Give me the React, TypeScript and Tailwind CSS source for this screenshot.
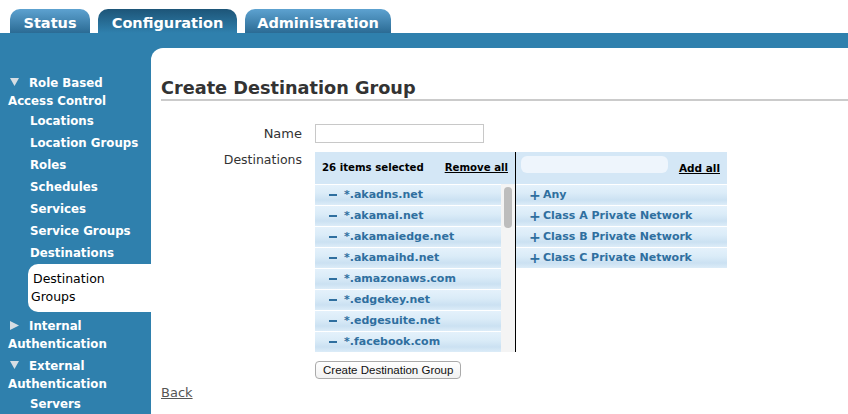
import React from "react";

const tabs = [
  { label: "Status", width: "w-[80px]", active: false },
  { label: "Configuration", width: "w-[139px]", active: true },
  { label: "Administration", width: "w-[146px]", active: false },
];

const roleItems = [
  "Locations",
  "Location Groups",
  "Roles",
  "Schedules",
  "Services",
  "Service Groups",
  "Destinations",
];

const selected = [
  "*.akadns.net",
  "*.akamai.net",
  "*.akamaiedge.net",
  "*.akamaihd.net",
  "*.amazonaws.com",
  "*.edgekey.net",
  "*.edgesuite.net",
  "*.facebook.com",
  "*.fbcdn.net",
  "*.google.com",
  "*.googleapis.com",
  "*.gstatic.com",
];

const available = [
  "Any",
  "Class A Private Network",
  "Class B Private Network",
  "Class C Private Network",
];

const rowBg =
  "bg-[linear-gradient(to_bottom,#e4f1fb_0%,#dbecf8_40%,#cbe1f2_75%,#dcecf8_100%)]";

function Down() {
  return (
    <svg width="9" height="8" viewBox="0 0 9 8" className="inline-block mr-[10px] ml-[2px] align-[1px]">
      <polygon points="0,0 9,0 4.5,8" fill="#d6dde3" />
    </svg>
  );
}

function Right() {
  return (
    <svg width="9" height="9" viewBox="0 0 9 9" className="inline-block mr-[10px] ml-[2px] align-[0px]">
      <polygon points="0,0 9,4.5 0,9" fill="#d6dde3" />
    </svg>
  );
}

export default function App() {
  return (
    <div className="w-[848px] h-[414px] overflow-hidden bg-white font-['DejaVu_Sans',sans-serif]">
      {/* Tabs */}
      <div className="flex items-end h-[33px] pl-[10px] gap-[8px]">
        {tabs.map((t) => (
          <div
            key={t.label}
            className={
              t.active
                ? `${t.width} h-[24px] rounded-t-[10px] text-center text-white font-bold text-[14.5px] leading-[28px] bg-[linear-gradient(to_bottom,#1d5578,#2f80ad)]`
                : `${t.width} h-[24px] rounded-t-[10px] text-center text-white font-bold text-[14.5px] leading-[28px] bg-[linear-gradient(to_bottom,#5da2d0,#2b6b94)]`
            }
          >
            {t.label}
          </div>
        ))}
      </div>

      <div className="flex bg-[#2f80ad] pt-[15px] h-[381px]">
        {/* Sidebar */}
        <div className="w-[151px] shrink-0 pt-[26px] pl-[8px] text-white font-bold text-[11.8px]">
          <div className="leading-[18px] pr-[8px]">
            <Down />
            Role Based Access Control
          </div>
          {roleItems.map((i) => (
            <div key={i} className="h-[22px] leading-[22px] pl-[22px]">
              {i}
            </div>
          ))}
          <div className="ml-[20px] bg-white rounded-l-[10px] py-[6px] pl-[3px] indent-[2px] text-black font-normal text-[12.5px] leading-[18px]">
            Destination
            <br />
            Groups
          </div>
          <div className="mt-[5px] leading-[18px] pr-[8px]">
            <Right />
            Internal Authentication
          </div>
          <div className="mt-[4px] leading-[18px] pr-[8px]">
            <Down />
            External Authentication
          </div>
          <div className="h-[22px] leading-[22px] pl-[22px]">Servers</div>
        </div>

        {/* Content */}
        <div className="flex-1 bg-white rounded-tl-[12px] pl-[10px]">
          <h1 className="mt-[29px] text-[17.7px] leading-[22px] font-bold text-[#333] border-b-2 border-[#cbcbcb]">
            Create Destination Group
          </h1>

          <div className="grid grid-cols-[141px_1fr] gap-x-[13px] mt-[23px]">
            <div className="text-right text-[13px] leading-[19px] text-[#333]">Name</div>
            <input className="w-[169px] h-[19px] border border-[#c8c8c8] bg-white outline-none" />

            <div className="mt-[9px] text-right text-[12.5px] leading-[16px] text-[#333]">
              Destinations
            </div>
            <div className="mt-[9px] flex h-[200px]">
              {/* Selected */}
              <div className="w-[200px] flex flex-col">
                <div className="h-[32px] shrink-0 bg-[#d4e7f6] flex items-center justify-between px-[7px] text-[10.2px] font-bold text-black">
                  <span>26 items selected</span>
                  <span className="underline">Remove all</span>
                </div>
                <div className="flex h-[168px]">
                  <div className="w-[186px] overflow-hidden">
                    {selected.map((s) => (
                      <div
                        key={s}
                        className={`h-[21px] border-t border-white ${rowBg} pl-[14px] flex items-center text-[11px] font-bold text-[#2f6f9f]`}
                      >
                        <span className="w-[8px] h-[2px] bg-[#2f6f9f] mr-[7px]" />
                        {s}
                      </div>
                    ))}
                  </div>
                  <div className="w-[14px] bg-[#f4f4f4] pl-[3px] pt-[3px]">
                    <div className="w-[8px] h-[41px] rounded-full bg-[#bdbdbd]" />
                  </div>
                </div>
              </div>
              <div className="w-px bg-black" />
              {/* Available */}
              <div className="w-[211px] flex flex-col">
                <div className="h-[32px] shrink-0 bg-[#d4e7f6] flex items-start justify-between pl-[5px] pr-[7px] text-[10.5px] font-bold text-black">
                  <div className="mt-[4px] w-[147px] h-[17px] rounded-[6px] bg-[#eef5fc]" />
                  <span className="underline leading-[32px]">Add all</span>
                </div>
                {available.map((s) => (
                  <div
                    key={s}
                    className={`h-[21px] border-t border-white ${rowBg} pl-[13px] flex items-center text-[11px] font-bold text-[#2f6f9f]`}
                  >
                    <span className="w-[10px] mr-[4px] text-[14px] leading-[14px]">+</span>
                    {s}
                  </div>
                ))}
              </div>
            </div>

            <div />
            <div className="mt-[9px] flex">
              <button className="h-[18px] px-[7px] border border-[#aaa] rounded-[4px] bg-[linear-gradient(to_bottom,#ffffff,#f1f1f1)] text-[11.5px] leading-[14px] text-[#111] font-['Liberation_Sans',Arial,sans-serif]">
                Create Destination Group
              </button>
            </div>
          </div>

          <div className="mt-[6px] text-[13px] leading-[16px] text-[#555] underline">Back</div>
        </div>
      </div>
    </div>
  );
}
